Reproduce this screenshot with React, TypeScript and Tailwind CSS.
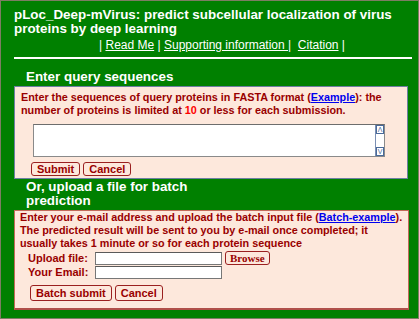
export default function App() {
  return (
    <div
      className="w-[419px] h-[319px] bg-[#008000] border border-[#7d7d63] overflow-hidden"
      style={{ fontFamily: "'Liberation Sans', Arial, sans-serif" }}
    >
      <div className="pl-[13px] pr-[6px] pt-[7px]">
        <h1 className="text-white font-bold text-[13.4px] leading-[14px]">
          pLoc_Deep-mVirus: predict subcellular localization of virus proteins by deep learning
        </h1>
        <p className="text-white text-[12px] leading-[14px] mt-[2px] pl-[85px] whitespace-pre">
          |{" "}<a href="#" className="underline">Read Me</a>{" | "}
          <a href="#" className="underline">Supporting information </a>{"|  "}
          <a href="#" className="underline">Citation</a>{" |"}
        </p>
        <div className="h-[2px] bg-white mt-[5px]" />

        <h2 className="text-white font-bold text-[13.4px] leading-[16px] mt-[10px] pl-[12px]">
          Enter query sequences
        </h2>
        <div className="mt-[1px] mr-[4px] bg-[#fde8dc] border border-[#6e7fa3] px-[6px] pt-[4px] pb-[2px]">
          <p className="text-[#990000] font-bold text-[10.8px] leading-[13px]">
            Enter the sequences of query proteins in FASTA format (
            <a href="#" className="text-[#0000ee] underline">Example</a>): the number of proteins is limited at{" "}
            <span className="text-[#ff0000]">10</span> or less for each submission.
          </p>
          <div className="flex mt-[7px] ml-[12px]">
            <div className="w-[352px] h-[33px] bg-white border border-[#8a8a8a] border-t-[#6d6d6d] flex justify-end">
              <div className="w-[9px] h-full border-l border-[#7b8fb3] flex flex-col justify-between bg-white">
                <span className="h-[9px] border border-[#4a6a9a] text-[7px] leading-[7px] text-[#4a6a9a] text-center">Λ</span>
                <span className="h-[9px] border border-[#4a6a9a] text-[7px] leading-[7px] text-[#4a6a9a] text-center">V</span>
              </div>
            </div>
          </div>
          <div className="flex gap-[3px] mt-[5px] ml-[10px]">
            <button className="h-[14px] px-[5px] border border-[#9a2020] rounded-[3px] text-[#990000] font-bold text-[11px] leading-[11px]">
              Submit
            </button>
            <button className="h-[14px] px-[5px] border border-[#9a2020] rounded-[3px] text-[#990000] font-bold text-[11px] leading-[11px]">
              Cancel
            </button>
          </div>
        </div>

        <h2 className="text-white font-bold text-[13.4px] leading-[14px] mt-[1px] pl-[12px] w-[175px]">
          Or, upload a file for batch prediction
        </h2>
        <div className="mt-[2px] mr-[3px] bg-[#fde8dc] border border-[#c26a5a] border-b-2 border-b-[#b0504a] px-[5px] pb-[7px]">
          <p className="text-[#990000] font-bold text-[10.8px] leading-[13px]">
            Enter your e-mail address and upload the batch input file (
            <a href="#" className="text-[#0000ee] underline">Batch-example</a>). The predicted result will be sent to you by e-mail once completed; it usually takes 1 minute or so for each protein sequence
          </p>
          <div className="mt-[1px] pl-[8px] text-[#990000] font-bold text-[11px]">
            <div className="flex items-center h-[14px]">
              <span className="w-[67px]">Upload file:</span>
              <div className="w-[127px] h-[13px] bg-white border border-[#777] border-t-[#5a5a5a]" />
              <button
                className="ml-[3px] h-[14px] px-[4px] border border-[#9a2020] rounded-[3px] text-[#990000] font-bold text-[11px] leading-[11px]"
                style={{ fontFamily: "'Liberation Serif', 'Times New Roman', serif" }}
              >
                Browse
              </button>
            </div>
            <div className="flex items-center h-[14px]">
              <span className="w-[67px]">Your Email:</span>
              <div className="w-[127px] h-[13px] bg-white border border-[#777] border-t-[#5a5a5a]" />
            </div>
          </div>
          <div className="flex gap-[3px] mt-[6px] ml-[10px]">
            <button className="h-[16px] px-[5px] border border-[#9a2020] rounded-[3px] text-[#990000] font-bold text-[11px] leading-[11px]">
              Batch submit
            </button>
            <button className="h-[16px] px-[5px] border border-[#9a2020] rounded-[3px] text-[#990000] font-bold text-[11px] leading-[11px]">
              Cancel
            </button>
          </div>
        </div>
      </div>
    </div>
  );
}
